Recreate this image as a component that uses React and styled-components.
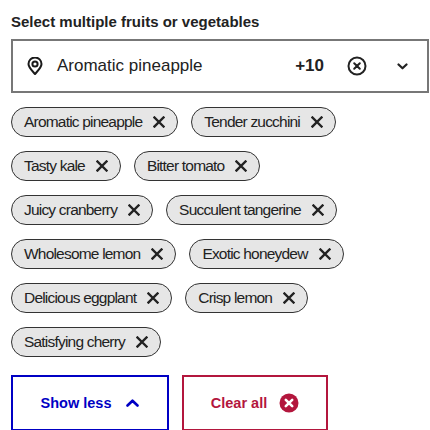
import React from 'react';
import styled, { createGlobalStyle } from 'styled-components';

const GlobalStyle = createGlobalStyle`
  body {
    margin: 0;
    background: #fff;
    font-family: "Liberation Sans", Arial, sans-serif;
    color: #1a1a1a;
  }
`;

const SWrapper = styled.div`
  width: 418px;
  padding: 13px 0 0 11px;
`;

const STitle = styled.p`
  margin: 0;
  font-size: 15px;
  line-height: 18px;
  font-weight: 700;
  color: #222;
`;

const SSelect = styled.div`
  margin-top: 8px;
  height: 54px;
  box-sizing: border-box;
  border: 2px solid #777;
  display: flex;
  align-items: center;
  padding: 0 19px 0 14px;
`;

const SValue = styled.span`
  flex: 1;
  margin-left: 14px;
  font-size: 17px;
  color: #222;
`;

const SCount = styled.span`
  font-size: 17px;
  font-weight: 700;
  color: #222;
`;

const SIconButton = styled.span`
  display: flex;
  align-items: center;
  margin-left: ${({ $gap }) => $gap}px;
  color: #222;
`;

const SChipList = styled.ul`
  list-style: none;
  margin: 14px 0 0;
  padding: 0;
  max-width: 345px;
  display: flex;
  flex-wrap: wrap;
  gap: 14px 13px;
`;

const SChip = styled.li`
  height: 30px;
  box-sizing: border-box;
  display: flex;
  align-items: center;
  gap: 11px;
  padding: 0 12px;
  border: 1px solid #333;
  border-radius: 15px;
  background: #e6e6e6;
  font-size: 15.5px;
  letter-spacing: -0.8px;
  color: #222;
  white-space: nowrap;
`;

const SActions = styled.div`
  margin-top: 18px;
  display: flex;
  gap: 13px;
`;

const SActionButton = styled.button`
  width: ${({ $width }) => $width}px;
  height: 56px;
  box-sizing: border-box;
  border: 2px solid ${({ $color }) => $color};
  background: #fff;
  color: ${({ $color }) => $color};
  display: flex;
  align-items: center;
  justify-content: center;
  gap: ${({ $gap }) => $gap}px;
  font-family: "Liberation Sans", Arial, sans-serif;
  font-size: 14.5px;
  font-weight: 700;
  padding: 0;
  cursor: pointer;
`;

const BLUE = '#0000c4';
const CRIMSON = '#b3163d';

const chips = [
  'Aromatic pineapple',
  'Tender zucchini',
  'Tasty kale',
  'Bitter tomato',
  'Juicy cranberry',
  'Succulent tangerine',
  'Wholesome lemon',
  'Exotic honeydew',
  'Delicious eggplant',
  'Crisp lemon',
  'Satisfying cherry',
];

function PinIcon() {
  return (
    <svg width="16" height="18" viewBox="0 0 16 18" fill="none" stroke="currentColor" strokeWidth="2" strokeLinejoin="round">
      <path d="M8 17 C5 13.5 1.5 10.5 1.5 7 A6.5 6.5 0 0 1 14.5 7 C14.5 10.5 11 13.5 8 17 Z" />
      <circle cx="8" cy="7" r="2.6" />
    </svg>
  );
}

function CircleXIcon() {
  return (
    <svg width="20" height="20" viewBox="0 0 20 20" fill="none" stroke="currentColor" strokeWidth="2" strokeLinecap="round">
      <circle cx="10" cy="10" r="8.5" />
      <path d="M7.2 7.2 L12.8 12.8 M12.8 7.2 L7.2 12.8" />
    </svg>
  );
}

function ChevronDown() {
  return (
    <svg width="11" height="7" viewBox="0 0 11 7" fill="none" stroke="currentColor" strokeWidth="2.2" strokeLinecap="round" strokeLinejoin="round">
      <path d="M1.5 1.5 L5.5 5.3 L9.5 1.5" />
    </svg>
  );
}

function ChipX() {
  return (
    <svg width="12" height="12" viewBox="0 0 12 12" fill="none" stroke="#222" strokeWidth="2.4" strokeLinecap="square">
      <path d="M1.5 1.5 L10.5 10.5 M10.5 1.5 L1.5 10.5" />
    </svg>
  );
}

function ChevronUp() {
  return (
    <svg width="13" height="8" viewBox="0 0 13 8" fill="none" stroke="currentColor" strokeWidth="2.6" strokeLinecap="round" strokeLinejoin="round">
      <path d="M1.5 6.5 L6.5 1.7 L11.5 6.5" />
    </svg>
  );
}

function FilledCircleX() {
  return (
    <svg width="20" height="20" viewBox="0 0 20 20">
      <circle cx="10" cy="10" r="9.5" fill="currentColor" />
      <path d="M6.8 6.8 L13.2 13.2 M13.2 6.8 L6.8 13.2" stroke="#fff" strokeWidth="2.6" strokeLinecap="round" />
    </svg>
  );
}

function App() {
  return (
    <SWrapper>
      <GlobalStyle />
      <STitle>Select multiple fruits or vegetables</STitle>
      <SSelect>
        <PinIcon />
        <SValue>Aromatic pineapple</SValue>
        <SCount>+10</SCount>
        <SIconButton $gap={23}>
          <CircleXIcon />
        </SIconButton>
        <SIconButton $gap={30}>
          <ChevronDown />
        </SIconButton>
      </SSelect>
      <SChipList>
        {chips.map((chip) => (
          <SChip key={chip}>
            {chip}
            <ChipX />
          </SChip>
        ))}
      </SChipList>
      <SActions>
        <SActionButton $width={158} $color={BLUE} $gap={15}>
          Show less
          <ChevronUp />
        </SActionButton>
        <SActionButton $width={146} $color={CRIMSON} $gap={12}>
          Clear all
          <FilledCircleX />
        </SActionButton>
      </SActions>
    </SWrapper>
  );
}

export default App;
